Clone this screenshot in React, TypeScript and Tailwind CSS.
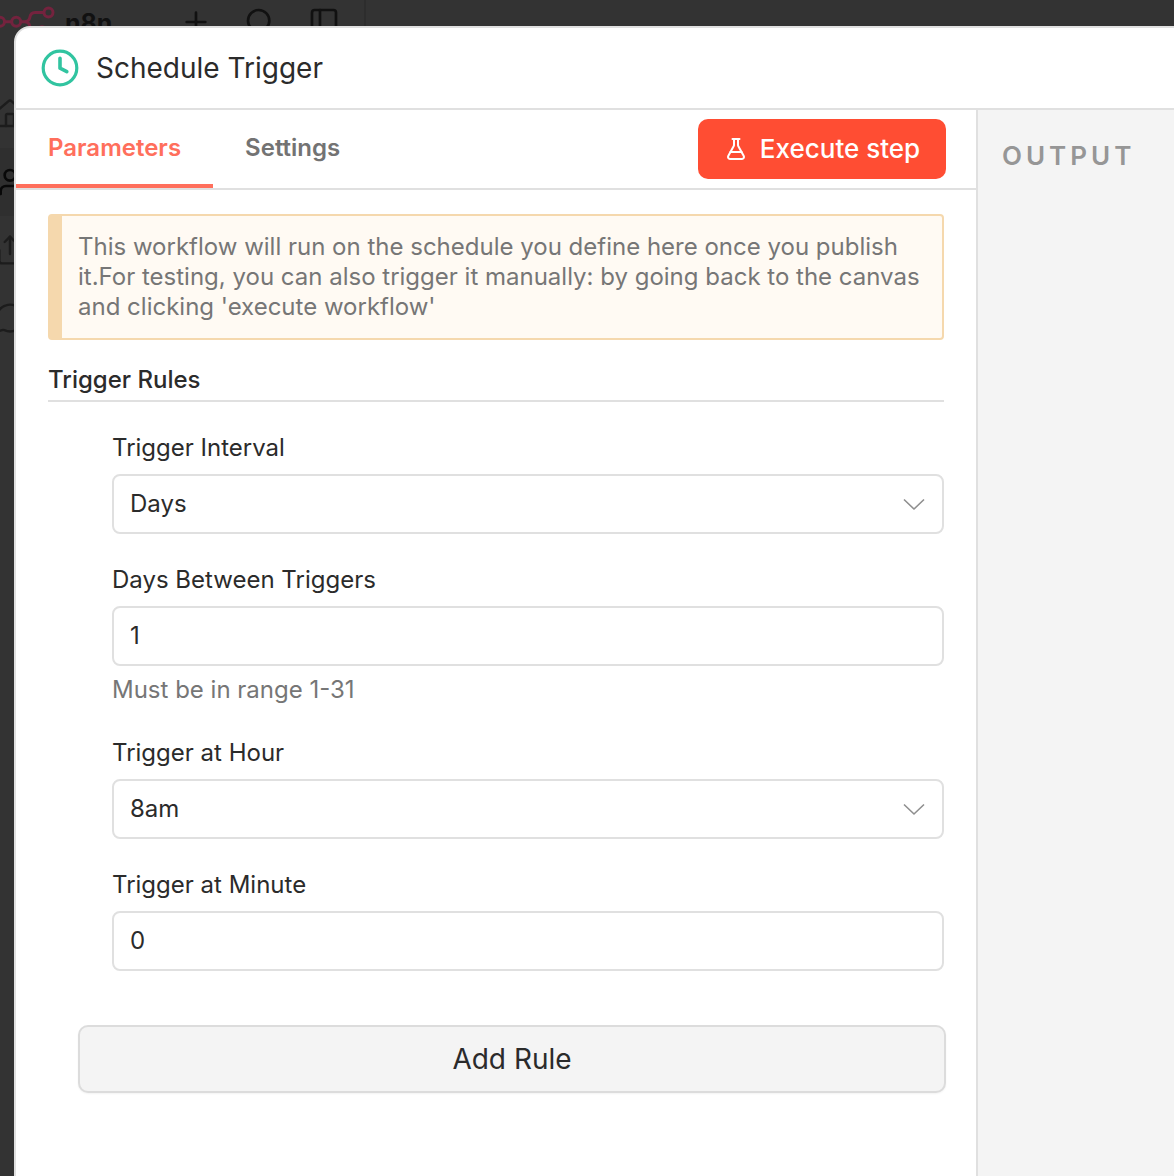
import type { ReactNode } from "react";
import { FlaskConical, House, MessageCircle, PanelLeft, Plus, Search, Share, User } from "lucide-react";

function Logo() {
    return (
        <svg width="58" height="40" viewBox="0 0 58 40" fill="none" stroke="#74233e" strokeWidth="3">
            <circle cx="0" cy="21.7" r="4.5" />
            <circle cx="16.2" cy="21.7" r="4.5" />
            <circle cx="48.5" cy="12.4" r="4.5" />
            <circle cx="42" cy="31.200" r="4.5" />
            <path d="M4.800 21.700h6.700M21 21.700h3.500c3 0 4.800-1.400 5.300-4.200s2.200-5 5.200-5h9M24.500 21.700c3 0 4.800 1.700 5.300 4.500s2.200 5 5.200 5h3" />
        </svg>
    );
}

function ClockIcon() {
    return (
        <svg width="38" height="38" viewBox="0 0 38 38" fill="none" stroke="#31c4a0" strokeWidth="3.200">
            <circle cx="19" cy="19" r="16.800" />
            <path d="M19 9.300v9.900l6.800 3.400" strokeWidth="3.600" strokeLinecap="round" strokeLinejoin="round" />
        </svg>
    );
}

function Backdrop() {
    return (
        <div className="h-full bg-[#333333] text-[#111111]">
            <div className="flex h-[64px] w-[366px] items-start border-r-2 border-[#2d2d2d]">
                <Logo />
                <span className="ml-[7px] mt-[5px] w-[115px] text-[25px] leading-[36px] font-bold">n8n</span>
                <div className="mt-[6px] flex gap-8">
                    <Plus size={32} />
                    <Search size={32} />
                    <PanelLeft size={32} />
                </div>
            </div>
            <div className="-ml-[6px] mt-4 flex w-[200px] flex-col text-[#1c1c1c]">
                <div className="flex h-[68px] items-center"><House size={32} strokeWidth={1.8} /></div>
                <div className="flex h-[68px] items-center bg-[#2f2f2f] text-[#080808]"><User size={32} /></div>
                <div className="flex h-[68px] items-center"><Share size={32} strokeWidth={1.8} /></div>
                <div className="flex h-[68px] items-center"><MessageCircle size={32} strokeWidth={1.8} /></div>
            </div>
        </div>
    );
}

function Field({ label, value, select, hint }: { label: string; value: string; select?: boolean; hint?: string }) {
    return (
        <div>
            <div className="mb-[11px] text-2xl leading-[30px]">{label}</div>
            <div className="flex h-[60px] items-center justify-between rounded-lg border-2 border-[#e0e0e0] bg-white px-4 text-2xl">
                <span>{value}</span>
                {select && (
                    <svg width="24" height="14" viewBox="0 0 24 14" fill="none" stroke="#8f8f8f" strokeWidth="1.600">
                        <path d="M2 2.500l10 9.500 10-9.500" />
                    </svg>
                )}
            </div>
            {hint && <div className="mt-[9px] mb-[2px] text-2xl leading-[30px] text-[#767676]">{hint}</div>}
        </div>
    );
}

function Tab({ active, children }: { active?: boolean; children: ReactNode }) {
    if (active) {
        return <div className="h-full border-b-4 border-[#ff6f5c] px-8 pt-[22px] text-2xl leading-[32px] font-semibold text-[#ff6f5c]">{children}</div>;
    }
    return <div className="h-full px-8 pt-[22px] text-2xl leading-[32px] font-semibold text-[#737373]">{children}</div>;
}

export default function App() {
    return (
        <div className="relative h-[1176px] w-[1174px] overflow-hidden font-['Inter',sans-serif]">
            <Backdrop />

            {/* Node details modal */}
            <div className="absolute top-[26px] left-[14px] flex h-[1200px] w-[1300px] flex-col overflow-hidden rounded-2xl border-2 border-[#e0e0e0] bg-white text-[#2b2b2b]">
                <header className="flex h-[82px] shrink-0 items-center border-b-2 border-[#e0e0e0] pl-[25px]">
                    <ClockIcon />
                    <h1 className="ml-[17px] text-[28px]">Schedule Trigger</h1>
                </header>

                <div className="flex grow">
                    <main className="w-[962px] border-r-2 border-[#e0e0e0]">
                        <div className="flex h-[80px] border-b-2 border-[#e0e0e0]">
                            <Tab active>Parameters</Tab>
                            <Tab>Settings</Tab>
                            <button className="mt-[9px] mr-[30px] ml-auto flex h-[60px] w-[248px] items-center justify-center gap-3 rounded-[10px] bg-[#ff4d33] text-[26px] font-medium text-white">
                                <FlaskConical size={24} />
                                <span className="pb-px">Execute step</span>
                            </button>
                        </div>

                        <div className="pt-6 pr-8 pl-8">
                            <div className="h-[126px] rounded-[4px] border-2 border-l-[14px] border-[#f5d8ad] bg-[#fffaf3] pt-4 pl-4 text-2xl leading-[30px] text-[#767676]">
                                This workflow will run on the schedule you define here once you publish<br />
                                it.For testing, you can also trigger it manually: by going back to the canvas<br />
                                and clicking 'execute workflow'
                            </div>

                            <h2 className="mt-[22px] h-[40px] border-b-2 border-[#e0e0e0] text-2xl leading-[36px] font-medium">Trigger Rules</h2>

                            <div className="mt-[31px] ml-16 flex flex-col gap-[31px]">
                                <Field label="Trigger Interval" value="Days" select />
                                <Field label="Days Between Triggers" value="1" hint="Must be in range 1-31" />
                                <Field label="Trigger at Hour" value="8am" select />
                                <Field label="Trigger at Minute" value="0" />
                            </div>

                            <button className="mt-[54px] -mr-[2px] ml-[30px] flex h-[68px] w-[868px] items-center justify-center rounded-[10px] border-2 border-[#dcdcdc] bg-[#f4f4f4] text-[28px] shadow-xs">
                                Add Rule
                            </button>
                        </div>
                    </main>

                    <aside className="grow bg-[#f4f4f4] pt-[28px] pl-6">
                        <h2 className="text-[26px] leading-[36px] font-semibold tracking-[4px] text-[#969696]">OUTPUT</h2>
                    </aside>
                </div>
            </div>
        </div>
    );
}
